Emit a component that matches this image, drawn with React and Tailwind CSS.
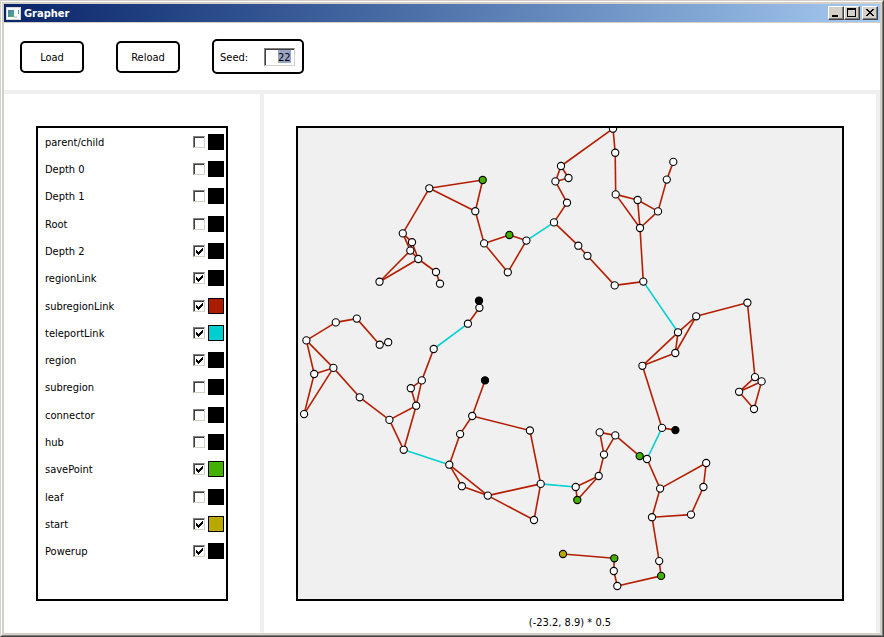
import React, { useState } from "react";

const INITIAL_LAYERS = [
  { name: "parent/child", checked: false, color: "bg-black" },
  { name: "Depth 0", checked: false, color: "bg-black" },
  { name: "Depth 1", checked: false, color: "bg-black" },
  { name: "Root", checked: false, color: "bg-black" },
  { name: "Depth 2", checked: true, color: "bg-black" },
  { name: "regionLink", checked: true, color: "bg-black" },
  { name: "subregionLink", checked: true, color: "bg-[#aa1c00]" },
  { name: "teleportLink", checked: true, color: "bg-[#00cfcf]" },
  { name: "region", checked: true, color: "bg-black" },
  { name: "subregion", checked: false, color: "bg-black" },
  { name: "connector", checked: false, color: "bg-black" },
  { name: "hub", checked: false, color: "bg-black" },
  { name: "savePoint", checked: true, color: "bg-[#44b000]" },
  { name: "leaf", checked: false, color: "bg-black" },
  { name: "start", checked: true, color: "bg-[#b8a800]" },
  { name: "Powerup", checked: true, color: "bg-black" },
];

// id: [x, y, kind]
const NODES = {
  a1: [429.3, 188.3],
  a2: [482.7, 180, "save"],
  a3: [475.3, 211.2],
  a4: [402.8, 233.4],
  a5: [412, 242.2],
  a6: [410.3, 250.6],
  a7: [418.3, 259],
  a8: [379.5, 281.7],
  a9: [436, 272],
  a10: [440, 283.7],
  b1: [484.1, 243.4],
  b2: [509.4, 235, "save"],
  b3: [526.4, 240.6],
  b4: [507.8, 272.3],
  c1: [554, 222.4],
  c2: [567, 202.7],
  c3: [555.4, 181.4],
  c4: [568.5, 178],
  c5: [561, 166],
  c6: [613, 128.7],
  c7: [615.2, 152.7],
  c8: [615.7, 194.4],
  c9: [637.6, 200],
  c10: [658, 211.4],
  c11: [640, 228],
  c12: [643.3, 281.6],
  c13: [614.7, 285.4],
  c14: [587.4, 255.8],
  c15: [578.3, 245.7],
  c16: [666.8, 179.6],
  c17: [673.3, 161.9],
  d1: [678, 332.3],
  d2: [696.2, 316.3],
  d3: [675.3, 353],
  d4: [642.4, 365.8],
  d5: [747.4, 302.7],
  d6: [755, 377.1],
  d7: [761.6, 381.4],
  d8: [739.1, 391.8],
  d9: [754, 409],
  d10: [662, 427.9],
  d11: [675.4, 430.1, "powerup"],
  e1: [647, 459],
  e2: [639.7, 456.1, "save"],
  e3: [615.3, 435.4],
  e4: [599.7, 432.4],
  e5: [604, 454.6],
  e6: [598.7, 476],
  e7: [575.7, 487],
  e8: [577.3, 500, "save"],
  e9: [660.1, 488.6],
  e10: [706.2, 463],
  e11: [703.4, 487],
  e12: [691, 514.6],
  e13: [652, 517.2],
  e14: [659.2, 561.1],
  e15: [661.1, 575.9, "save"],
  e16: [617.3, 586],
  e17: [613.8, 571],
  e18: [614.3, 558.3, "save"],
  e19: [563, 554, "start"],
  f1: [449.3, 464.7],
  f2: [461.9, 486.2],
  f3: [487.8, 495.6],
  f4: [534, 520],
  f5: [540.7, 483.9],
  f6: [529.9, 430.5],
  f7: [472.2, 416],
  f8: [460.1, 434.1],
  f9: [485, 380.4, "powerup"],
  g1: [403.7, 449.8],
  g2: [389.4, 419.9],
  g3: [416.2, 405.7],
  g4: [421.8, 380.4],
  g5: [410.8, 388.2],
  g6: [433.7, 349],
  g7: [359.7, 397.3],
  g8: [333.4, 367.9],
  g9: [314.2, 374],
  g10: [304.1, 414.1],
  g11: [306.4, 340.4],
  g12: [335.8, 322.4],
  g13: [356.8, 318.6],
  g14: [379.7, 344.7],
  g15: [388.2, 342.2],
  h1: [467.9, 323.7],
  h2: [479.4, 307.8],
  h3: [479, 300.7, "powerup"],
};

const SUBREGION_LINKS = [
  "a1 a2", "a1 a3", "a2 a3", "a1 a4", "a4 a5", "a4 a6", "a5 a6", "a5 a7",
  "a6 a7", "a6 a8", "a7 a8", "a7 a9", "a9 a10", "a3 b1", "b1 b2", "b2 b3",
  "b1 b4", "b3 b4", "c1 c2", "c2 c3", "c3 c4", "c3 c5", "c4 c5", "c5 c6",
  "c6 c7", "c7 c8", "c8 c9", "c8 c11", "c9 c10", "c9 c11", "c10 c11",
  "c11 c12", "c12 c13", "c13 c14", "c14 c15", "c15 c1", "c10 c16",
  "c16 c17", "d1 d2", "d1 d3", "d2 d3", "d1 d4", "d3 d4", "d2 d5", "d5 d6",
  "d6 d7", "d6 d8", "d7 d8", "d7 d9", "d8 d9", "d4 d10", "d10 d11", "e1 e2",
  "e2 e3", "e3 e4", "e3 e5", "e4 e5", "e5 e6", "e6 e7", "e6 e8", "e7 e8",
  "e1 e9", "e9 e10", "e10 e11", "e11 e12", "e12 e13", "e9 e13", "e13 e14",
  "e14 e15", "e15 e16", "e16 e17", "e17 e18", "e18 e19", "f1 f2", "f1 f3",
  "f2 f3", "f3 f4", "f3 f5", "f4 f5", "f5 f6", "f6 f7", "f7 f8", "f8 f1",
  "f7 f9", "g1 g2", "g1 g3", "g2 g3", "g3 g4", "g3 g5", "g4 g5", "g4 g6",
  "g2 g7", "g7 g8", "g8 g9", "g8 g10", "g9 g10", "g8 g11", "g9 g11",
  "g11 g12", "g12 g13", "g13 g14", "g14 g15", "h1 h2", "h2 h3",
];

const TELEPORT_LINKS = ["b3 c1", "c12 d1", "d10 e1", "f5 e7", "g1 f1", "g6 h1"];

const NODE_FILL = {
  save: "#44b000",
  start: "#b8a800",
  powerup: "#000000",
};

function Links({ links, color }) {
  return (
    <g stroke={color} strokeWidth="1.6">
      {links.map((link) => {
        const [from, to] = link.split(" ").map((id) => NODES[id]);
        return (
          <line key={link} x1={from[0]} y1={from[1]} x2={to[0]} y2={to[1]} />
        );
      })}
    </g>
  );
}

function Graph() {
  return (
    <svg
      viewBox="298 128 544 471"
      className="min-h-0 w-full flex-1"
      role="img"
      aria-label="Region graph"
    >
      <Links links={SUBREGION_LINKS} color="#b41e00" />
      <Links links={TELEPORT_LINKS} color="#00d0d0" />
      <g stroke="#000000" strokeWidth="1.1">
        {Object.entries(NODES).map(([id, [x, y, kind]]) => (
          <circle key={id} cx={x} cy={y} r="3.6" fill={NODE_FILL[kind] || "#ffffff"} />
        ))}
      </g>
    </svg>
  );
}

function CaptionButton({ label, children }) {
  return (
    <button
      type="button"
      aria-label={label}
      className="h-3.5 w-4 border border-t-white border-l-white border-r-[#404040] border-b-[#404040] bg-[#d4d0c8] shadow-[inset_-1px_-1px_0_#808080]"
    >
      <svg viewBox="0 0 14 12" className="block h-3 w-3.5" shapeRendering="crispEdges">
        {children}
      </svg>
    </button>
  );
}

function TitleBar() {
  return (
    <header className="flex h-[18px] items-center bg-linear-to-r from-[#0a246a] to-[#a6caf0] pr-0.5 pl-0.5">
      <svg viewBox="0 0 15 13" className="h-[13px] w-[15px]" aria-hidden="true">
        <defs>
          <linearGradient id="app-icon" x1="0" y1="0" x2="1" y2="1">
            <stop offset="0" stopColor="#4a7ab8" />
            <stop offset="1" stopColor="#56b070" />
          </linearGradient>
        </defs>
        <rect width="15" height="13" fill="#d8d8d8" />
        <rect x="1" y="1" width="13" height="11" fill="#fafafa" />
        <rect x="2" y="3" width="6" height="7" fill="url(#app-icon)" />
        <rect x="8" y="9" width="3" height="2" fill="#d4d8dc" />
        <rect x="12" y="3" width="1" height="4" fill="#5c9c88" />
      </svg>
      <h1 className="ml-[3px] flex-1 pt-px text-[11px] leading-4 font-bold text-white">
        Grapher
      </h1>
      <CaptionButton label="Minimize">
        <rect x="3" y="8" width="6" height="2" />
      </CaptionButton>
      <CaptionButton label="Maximize">
        <path d="M2 1h9v9H2zM3 3v6h7V3z" fillRule="evenodd" />
      </CaptionButton>
      <span className="w-0.5" />
      <CaptionButton label="Close">
        <path d="M3 2h2v1h1v1h2V3h1V2h2v1h-1v1H9v1H8v1h1v1h1v1h1v1H9V8H8V7H6v1H5v1H3V8h1V7h1V6h1V5H5V4H4V3H3z" />
      </CaptionButton>
    </header>
  );
}

function ToolButton({ children }) {
  return (
    <button
      type="button"
      className="h-8 w-16 rounded-[5px] border-2 border-black bg-white pt-0.5"
    >
      {children}
    </button>
  );
}

function LayerRow({ layer, onToggle }) {
  const id = `layer-${layer.name.replace(/\W/g, "-")}`;

  return (
    <li className="flex items-center pr-0.5 pl-[7px]">
      <label htmlFor={id} className="flex-1 pt-0.5">
        {layer.name}
      </label>
      <span className="mr-[3px] grid size-3">
        <input
          id={id}
          type="checkbox"
          checked={layer.checked}
          onChange={onToggle}
          className="peer col-start-1 row-start-1 size-3 appearance-none border border-t-[#808080] border-l-[#808080] border-r-[#d4d0c8] border-b-[#d4d0c8] bg-white shadow-[inset_1px_1px_0_#404040]"
        />
        <svg
          viewBox="0 0 12 12"
          shapeRendering="crispEdges"
          className="pointer-events-none invisible col-start-1 row-start-1 size-3 peer-checked:visible"
        >
          <path d="M3 5h1v1h1v1h1V6h1V5h1V4h1V3h1v3H9v1H8v1H7v1H6v1H5V9H4V8H3z" />
        </svg>
      </span>
      <button
        type="button"
        aria-label={`${layer.name} color`}
        className={`size-4 border border-black ${layer.color}`}
      />
    </li>
  );
}

export default function App() {
  const [layers, setLayers] = useState(INITIAL_LAYERS);
  const [seed, setSeed] = useState("22");

  function toggleLayer(name) {
    setLayers((current) =>
      current.map((layer) =>
        layer.name === name ? { ...layer, checked: !layer.checked } : layer
      )
    );
  }

  return (
    <div className="flex min-h-screen flex-col border border-t-[#d4d0c8] border-l-[#d4d0c8] border-r-[#404040] border-b-[#404040] bg-[#d4d0c8] font-['DejaVu_Sans_Condensed','DejaVu_Sans',sans-serif] text-[11px] leading-4 text-black">
      <div className="flex flex-1 flex-col border border-t-white border-l-white border-r-[#808080] border-b-[#808080] p-0.5">
        <TitleBar />
        <main className="mt-px flex flex-1 flex-col bg-[#f0f0f0]">
          <div className="flex h-[67px] items-center gap-8 bg-white px-4">
            <ToolButton>Load</ToolButton>
            <ToolButton>Reload</ToolButton>
            <div className="flex h-[35px] w-[92px] items-center justify-between rounded-[5px] border-2 border-black pr-[7px] pl-1.5">
              <label htmlFor="seed" className="pt-0.5">
                Seed:
              </label>
              <span className="flex h-[18px] w-[31px] items-center justify-end border border-t-[#808080] border-l-[#808080] border-r-[#d4d0c8] border-b-[#d4d0c8] pr-[3px] shadow-[inset_1px_1px_0_#404040]">
                <input
                  id="seed"
                  type="text"
                  value={seed}
                  onChange={(event) => setSeed(event.target.value)}
                  className="h-[13px] w-[13px] bg-[#98a4c4] pt-px leading-3 outline-none"
                />
              </span>
            </div>
          </div>
          <div className="mt-1 mr-1 flex flex-1 gap-1">
            <aside className="flex w-64 flex-col bg-white p-8">
              <ul className="grid min-h-[475px] flex-1 auto-rows-fr border-2 border-black pb-[34px]">
                {layers.map((layer) => (
                  <LayerRow
                    key={layer.name}
                    layer={layer}
                    onToggle={() => toggleLayer(layer.name)}
                  />
                ))}
              </ul>
            </aside>
            <section className="flex min-w-0 flex-1 flex-col bg-white px-8 pt-8">
              <div className="flex min-h-0 flex-1 flex-col border-2 border-black bg-[#f0f0f0]">
                <Graph />
              </div>
              <p className="h-8 pt-3.5 text-center">(-23.2, 8.9) * 0.5</p>
            </section>
          </div>
        </main>
      </div>
    </div>
  );
}
